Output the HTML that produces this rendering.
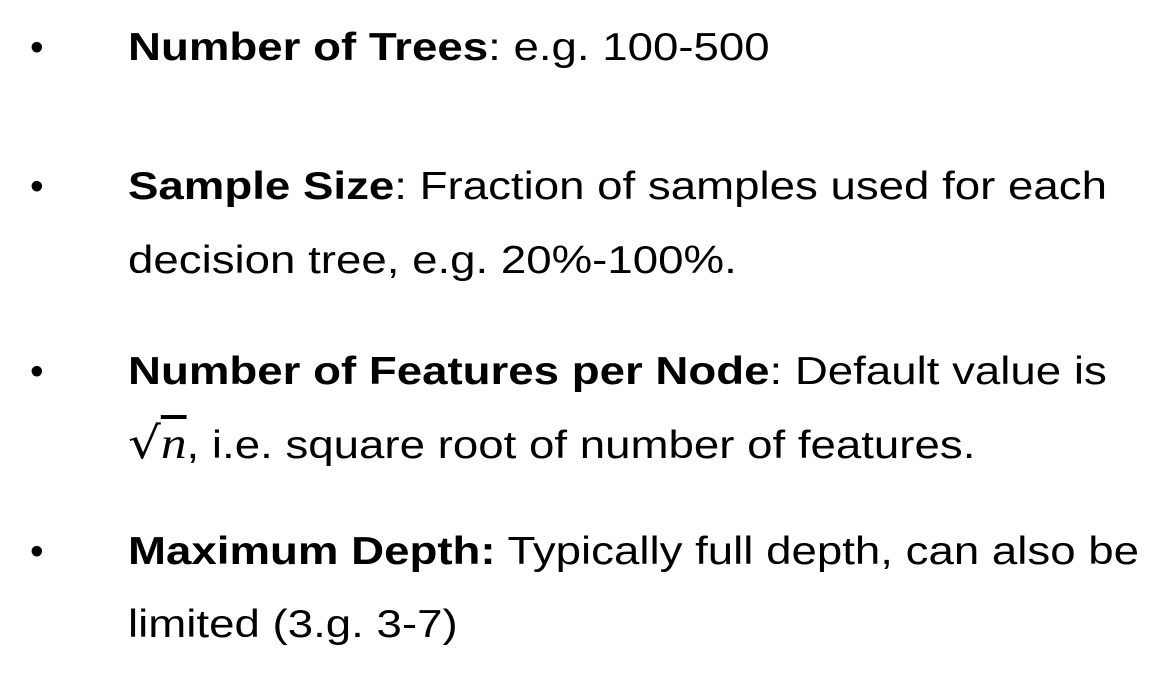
<!DOCTYPE html>
<html><head><style>
body{margin:0;width:1173px;height:674px;background:#fff;position:relative;overflow:hidden;font-family:"Liberation Sans",Arial,sans-serif;color:#000}
.l{position:absolute;left:128px;font-size:39px;line-height:39px;white-space:nowrap;transform:scaleX(1.17);transform-origin:0 0}
.b{position:absolute;left:30px;font-size:39px;line-height:39px}
i{font-family:"Liberation Serif",serif}
</style></head><body>
<div class="b" style="top:28px">•</div>
<div class="l" style="top:28px"><b>Number of Trees</b>: e.g. 100-500</div>
<div class="b" style="top:167px">•</div>
<div class="l" style="top:167px"><b>Sample Size</b>: Fraction of samples used for each</div>
<div class="l" style="top:241px">decision tree, e.g. 20%-100%.</div>
<div class="b" style="top:352px">•</div>
<div class="l" style="top:352px"><b>Number of Features per Node</b>: Default value is</div>
<div class="l" style="top:424px"><span style="font-family:'DejaVu Serif',serif;font-size:44px">√<span style="text-decoration:overline"><i style="font-size:44px">n</i></span></span>, i.e. square root of number of features.</div>
<div class="b" style="top:532px">•</div>
<div class="l" style="top:532px"><b>Maximum Depth:</b> Typically full depth, can also be</div>
<div class="l" style="top:605px">limited (3.g. 3-7)</div>
</body></html>
